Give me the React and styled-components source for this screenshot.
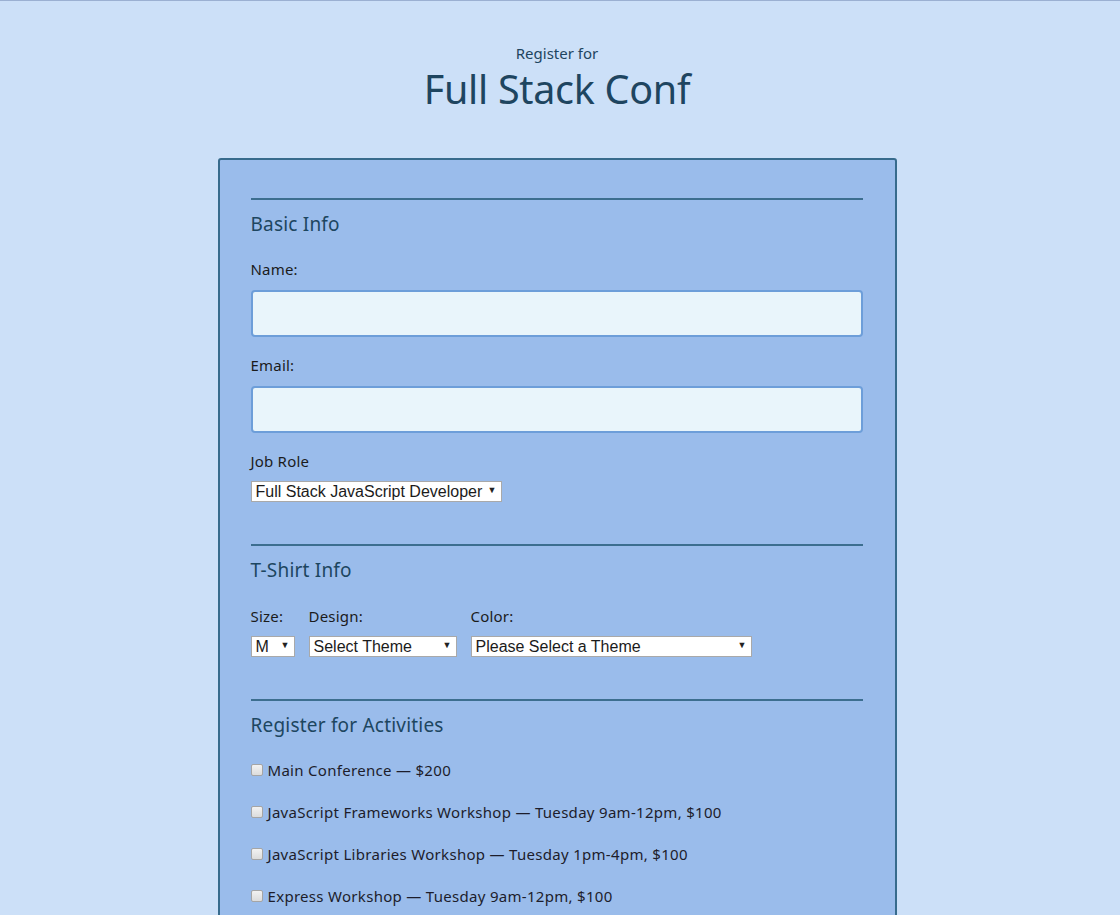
import React from "react";
import styled, { createGlobalStyle } from "styled-components";

const GlobalStyle = createGlobalStyle`
  html, body {
    margin: 0;
    padding: 0;
  }
  body {
    background: #cce0f8;
    border-top: 1px solid #9bb0d2;
    font-family: "Noto Sans", Lato, sans-serif;
    color: #1b1b1b;
  }
`;

const Page = styled.div`
  display: flex;
  flex-direction: column;
  align-items: center;
  padding-right: 6px;
  min-height: 914px;
`;

const Header = styled.header`
  display: flex;
  flex-direction: column;
  align-items: center;
  padding-top: 43px;
  color: #1e4560;
`;

const Kicker = styled.span`
  font-size: 15px;
  line-height: 18px;
`;

const Title = styled.h1`
  margin: 3px 0 0;
  font-size: 39.5px;
  line-height: 48px;
  font-weight: 400;
  letter-spacing: -0.3px;
`;

const Form = styled.form`
  box-sizing: border-box;
  width: 679px;
  margin-top: 45px;
  padding: 38px 32px 0 31px;
  background: #9abceb;
  border: 2px solid #376b8d;
  border-radius: 3px;
  display: flex;
  flex-direction: column;
`;

const Section = styled.fieldset`
  margin: 0 0 42px;
  padding: 0;
  border: none;
  border-top: 2px solid #3c6e8f;
  display: flex;
  flex-direction: column;
`;

const Legend = styled.h2`
  margin: 12px 0 ${p => p.$after || 25}px;
  font-size: 19px;
  line-height: 24px;
  font-weight: 400;
  letter-spacing: 0.2px;
  color: #1d4660;
`;

const Label = styled.label`
  font-size: 15px;
  line-height: 18px;
  letter-spacing: 0.2px;
  margin-bottom: ${p => p.$gap || 11}px;
`;

const TextInput = styled.input`
  box-sizing: border-box;
  height: 47px;
  margin-bottom: 19px;
  background: #e9f5fb;
  border: 2px solid #6d9ed9;
  border-radius: 4px;
`;

const Select = styled.select`
  appearance: none;
  box-sizing: border-box;
  width: ${p => p.$w}px;
  height: 21px;
  padding: 0 0 0 4px;
  background: #fff;
  border: 1px solid #a9a9a9;
  border-radius: 0;
  font-family: "Liberation Sans", Arial, sans-serif;
  font-size: 16px;
  color: #1b1b1b;
`;

const SelectWrap = styled.div`
  position: relative;
  width: ${p => p.$w}px;

  &::after {
    content: "▼";
    position: absolute;
    right: 5px;
    top: 5px;
    font-size: 9px;
    line-height: 10px;
    color: #222;
    pointer-events: none;
  }
`;

const ShirtRow = styled.div`
  display: flex;
  gap: 14px;
`;

const Field = styled.div`
  display: flex;
  flex-direction: column;
`;

const Activities = styled.div`
  display: flex;
  flex-direction: column;
  gap: 24px;
  margin-top: -1px;
`;

const Activity = styled.label`
  display: flex;
  align-items: center;
  gap: 5px;
  font-size: 15px;
  line-height: 18px;
  letter-spacing: 0.3px;
  color: #1d1d2b;
`;

const Box = styled.span`
  box-sizing: border-box;
  width: 12px;
  height: 12px;
  border: 1px solid #a5a5a5;
  border-radius: 2px;
  background: linear-gradient(#f2f2f2, #dcdcdc);
  flex: none;
`;

const Dropdown = ({ w, value }) => (
  <SelectWrap $w={w}>
    <Select $w={w} defaultValue={value}>
      <option>{value}</option>
    </Select>
  </SelectWrap>
);

const activities = [
  "Main Conference — $200",
  "JavaScript Frameworks Workshop — Tuesday 9am-12pm, $100",
  "JavaScript Libraries Workshop — Tuesday 1pm-4pm, $100",
  "Express Workshop — Tuesday 9am-12pm, $100",
];

export default function App() {
  return (
    <Page>
      <GlobalStyle />
      <Header>
        <Kicker>Register for</Kicker>
        <Title>Full Stack Conf</Title>
      </Header>
      <Form>
        <Section>
          <Legend $after={24}>Basic Info</Legend>
          <Label $gap={12}>Name:</Label>
          <TextInput type="text" />
          <Label $gap={12}>Email:</Label>
          <TextInput type="email" />
          <Label $gap={10}>Job Role</Label>
          <Dropdown w={251} value="Full Stack JavaScript Developer" />
        </Section>
        <Section>
          <Legend>T-Shirt Info</Legend>
          <ShirtRow>
            <Field>
              <Label $gap={10}>Size:</Label>
              <Dropdown w={44} value="M" />
            </Field>
            <Field>
              <Label $gap={10}>Design:</Label>
              <Dropdown w={148} value="Select Theme" />
            </Field>
            <Field>
              <Label $gap={10}>Color:</Label>
              <Dropdown w={281} value="Please Select a Theme" />
            </Field>
          </ShirtRow>
        </Section>
        <Section>
          <Legend>Register for Activities</Legend>
          <Activities>
            {activities.map(a => (
              <Activity key={a}>
                <Box />
                {a}
              </Activity>
            ))}
          </Activities>
        </Section>
      </Form>
    </Page>
  );
}
